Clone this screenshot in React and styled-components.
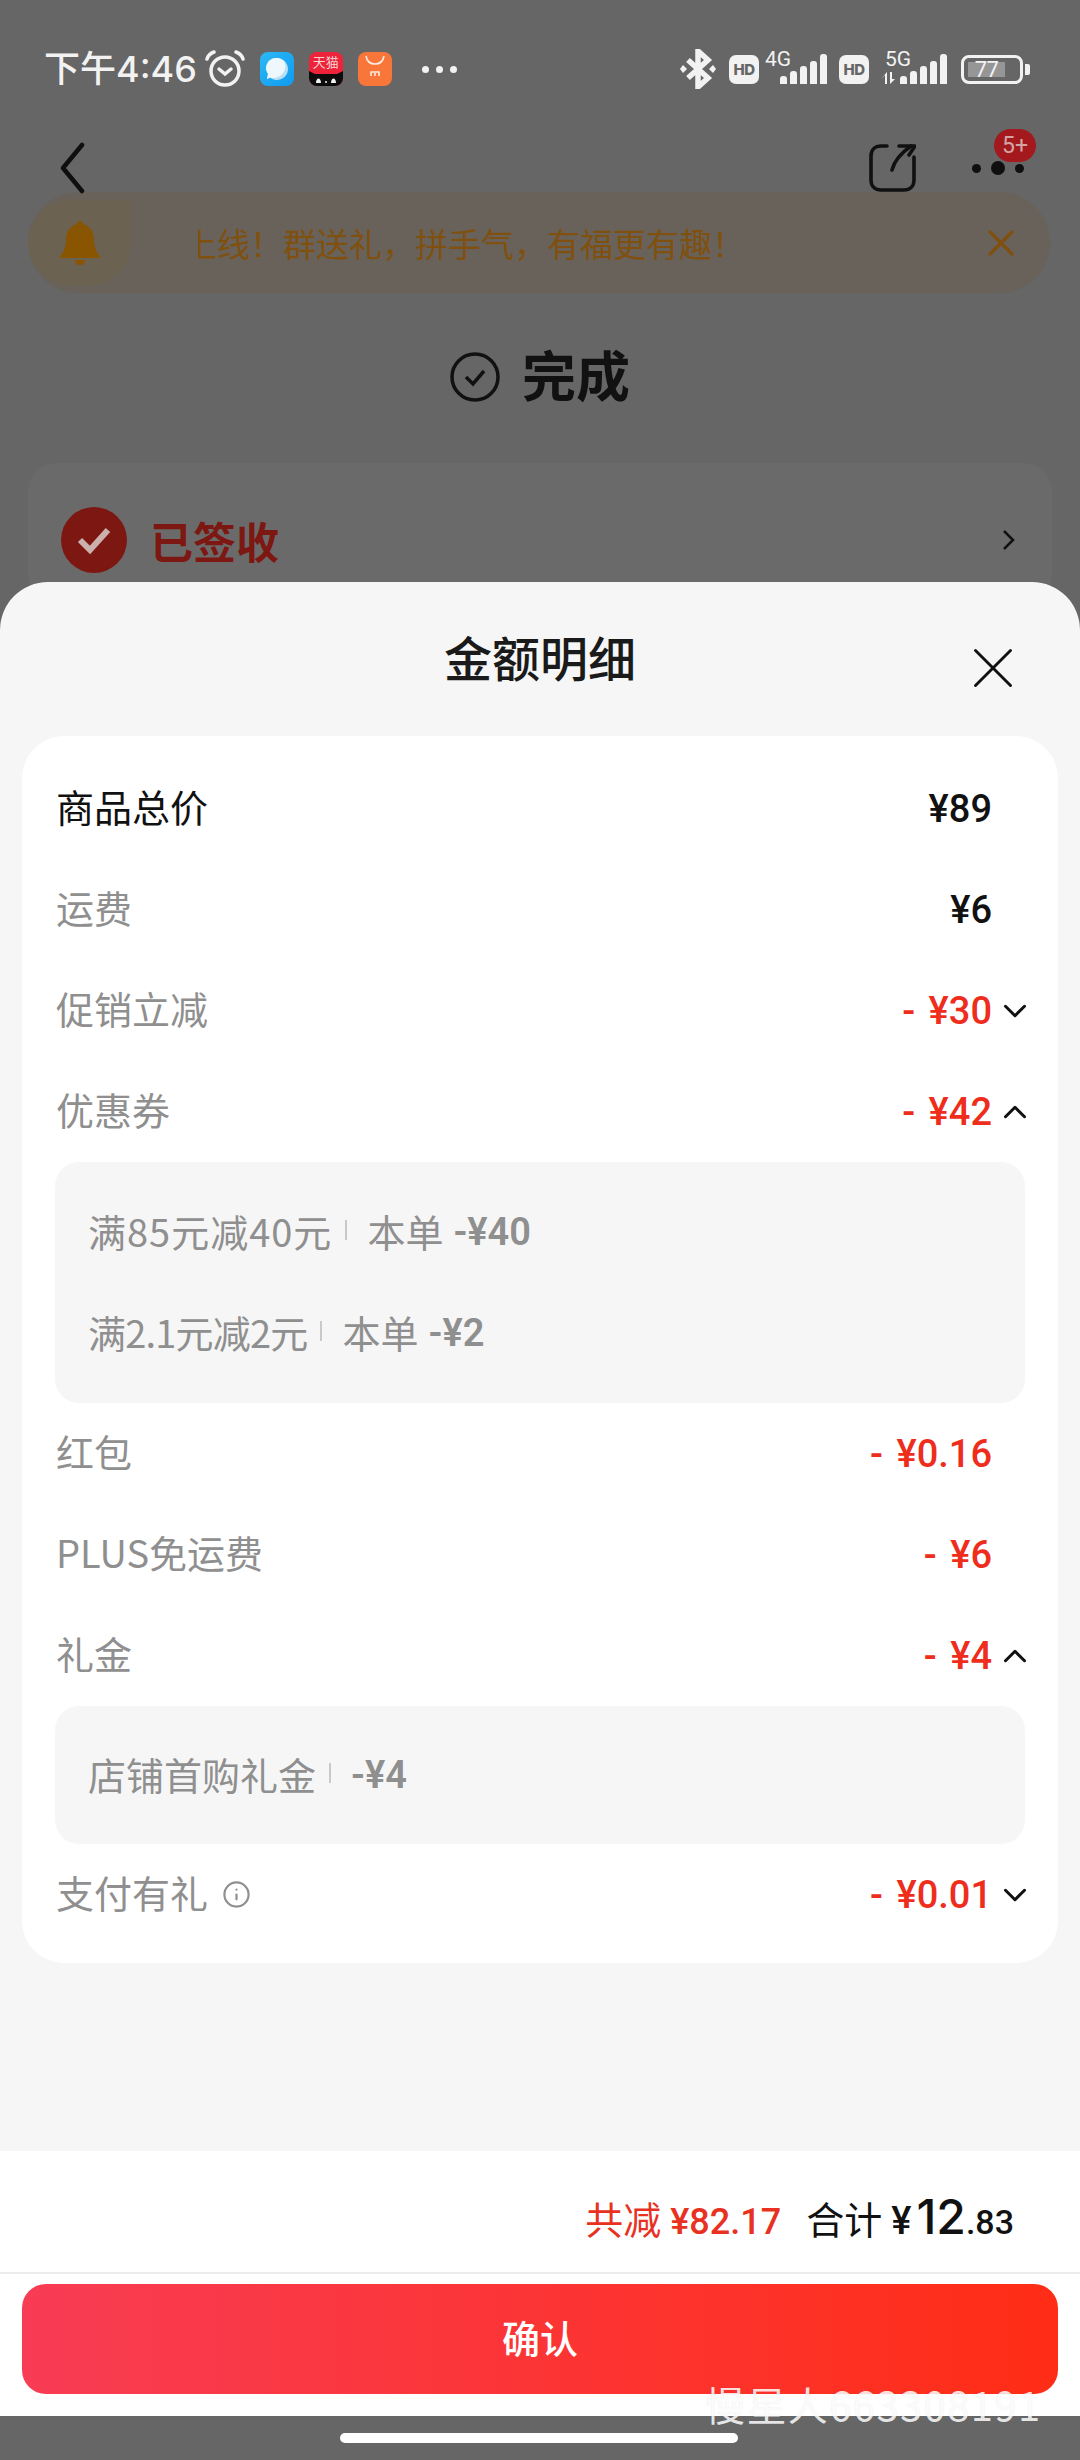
import styled, { createGlobalStyle } from "styled-components";
import { ChevronDown, ChevronUp, X, Info } from "lucide-react";

const FONT = `"Noto Sans CJK SC", "Noto Sans", sans-serif`;
const NUM = `"Roboto", "Noto Sans CJK SC", sans-serif`;

const Global = createGlobalStyle`
  html, body { margin: 0; padding: 0; background: #666; }
  * { box-sizing: border-box; }
`;

const Page = styled.div`
  position: relative;
  width: 1080px;
  height: 2460px;
  background: #666;
  overflow: hidden;
  font-family: ${FONT};
`;

const StatusBar = styled.div`
  height: 134px;
  padding: 46px 50px 0 44px;
  display: flex;
  align-items: flex-start;
  justify-content: space-between;
`;
const StatusSide = styled.div`
  height: 46px;
  display: flex;
  align-items: center;
`;
const Clock = styled.span`
  font-size: 36px;
  font-weight: 500;
  line-height: 46px;
  color: #f2f2f2;
  font-family: "Inter", "Noto Sans CJK SC", sans-serif;
  margin-right: 8px;
`;
const AppIcon = styled.div`
  width: 34px;
  height: 34px;
  border-radius: 8px;
  margin-left: 15px;
  background: ${(p) => p.$bg};
  position: relative;
  overflow: hidden;
  display: flex;
  align-items: center;
  justify-content: center;
`;
const TmallLabel = styled.span`
  position: absolute;
  top: 2px;
  left: 0;
  right: 0;
  text-align: center;
  color: #f6d5d5;
  font-size: 13px;
  line-height: 16px;
`;
const TmallCat = styled.svg`
  position: absolute;
  left: 0;
  bottom: 0;
`;
const MoreDots = styled.div`
  display: flex;
  gap: 7px;
  margin-left: 30px;
`;
const Dot = styled.i`
  width: 7px;
  height: 7px;
  border-radius: 50%;
  background: #f2f2f2;
`;
const Hd = styled.span`
  width: 30px;
  height: 29px;
  margin-left: ${(p) => p.$gap || 0}px;
  border-radius: 7px;
  background: #f2f2f2;
  color: #666;
  font: 800 15px/29px "Inter", sans-serif;
  text-align: center;
  letter-spacing: -0.5px;
`;
const NetLabel = styled.span`
  position: absolute;
  left: -15px;
  top: -6px;
  font: 400 21px/22px "Roboto", sans-serif;
  color: #f2f2f2;
`;
const NetArrows = styled.svg`
  position: absolute;
  left: -19px;
  bottom: 0;
`;
const Signal = styled.div`
  position: relative;
  height: 30px;
  margin: 0 ${(p) => p.$right}px 0 ${(p) => p.$left}px;
  display: flex;
  align-items: flex-end;
  gap: 3px;
`;
const Bar = styled.i`
  width: 7px;
  height: ${(p) => p.$h}px;
  background: #f2f2f2;
  border-radius: 3px 3px 0 0;
`;
const Battery = styled.div`
  width: 62px;
  height: 29px;
  border: 3px solid #f2f2f2;
  border-radius: 8px;
  padding: 4px 4px;
  display: flex;
`;
const BatteryFill = styled.div`
  width: 37px;
  background: #969696;
  display: flex;
  align-items: center;
  justify-content: center;
  color: #f2f2f2;
  font: 400 22px/17px "Roboto", sans-serif;
  letter-spacing: -0.5px;
`;
const BatteryTip = styled.i`
  width: 5px;
  height: 11px;
  margin-left: 2px;
  background: #f2f2f2;
  border-radius: 0 2px 2px 0;
`;

const NavBar = styled.div`
  height: 58px;
  padding: 8px 56px 0 60px;
  display: flex;
  align-items: flex-start;
  justify-content: space-between;
`;
const NavRight = styled.div`
  display: flex;
  align-items: center;
  gap: 56px;
  margin-top: 2px;
`;
const MoreWrap = styled.div`
  position: relative;
  display: flex;
  align-items: center;
  gap: 10px;
`;
const NavDot = styled.i`
  width: ${(p) => p.$s}px;
  height: ${(p) => p.$s}px;
  border-radius: 50%;
  background: #0f0f0f;
`;
const Badge = styled.span`
  position: absolute;
  top: -32px;
  right: -12px;
  width: 42px;
  height: 33px;
  border-radius: 17px;
  background: #a4191d;
  color: #d3a4a4;
  font: 400 23px/33px "Roboto", sans-serif;
  text-align: center;
`;

const Notice = styled.div`
  margin: 0 30px 0 28px;
  height: 101px;
  border-radius: 51px;
  background: #68625a;
  display: flex;
  align-items: center;
  color: #80500f;
  font-size: 33px;
`;
const BellWrap = styled.div`
  width: 103px;
  height: 86px;
  border-radius: 43px 0 43px 43px;
  background: #6c6252;
  display: flex;
  align-items: center;
  justify-content: center;
  flex-shrink: 0;
`;
const NoticeText = styled.div`
  margin-left: 67px;
  flex: 1;
  min-width: 0;
  overflow: hidden;
  white-space: nowrap;
`;
const NoticeScroll = styled.div`
  margin-left: -14px;
`;
const NoticeClose = styled.div`
  margin-right: 27px;
  display: flex;
`;

const OrderState = styled.div`
  margin-top: 54px;
  height: 60px;
  display: flex;
  align-items: center;
  justify-content: center;
  gap: 22px;
  color: #111;
`;
const OrderTitle = styled.span`
  font-size: 54px;
  line-height: 60px;
  font-weight: 700;
  margin-top: -6px;
`;
const SignCard = styled.div`
  margin: 56px 28px 0;
  height: 140px;
  padding: 44px 36px 0 33px;
  border-radius: 28px;
  background: #6a6a6a;
  display: flex;
  align-items: flex-start;
  justify-content: space-between;
`;
const SignLeft = styled.div`
  display: flex;
  align-items: center;
  gap: 23px;
  height: 66px;
  color: #7d1712;
  font-size: 43px;
  line-height: 60px;
  font-weight: 700;
`;
const SignMark = styled.div`
  width: 66px;
  height: 66px;
  border-radius: 50%;
  background: #7d1712;
  display: flex;
  align-items: center;
  justify-content: center;
`;
const CardArrow = styled.svg`
  margin-top: 22px;
`;

const Sheet = styled.div`
  position: absolute;
  left: 0;
  right: 0;
  top: 582px;
  height: 1834px;
  background: #f6f6f6;
  border-radius: 48px 48px 0 0;
  overflow: hidden;
  display: flex;
  flex-direction: column;
`;
const SheetHead = styled.div`
  position: relative;
  height: 154px;
  padding-top: 41px;
  text-align: center;
  font-size: 48px;
  line-height: 66px;
  font-weight: 500;
  color: #1a1a1a;
`;
const SheetClose = styled.div`
  position: absolute;
  top: 51px;
  right: 52px;
  display: flex;
`;
const Card = styled.div`
  margin: 0 22px;
  height: 1227px;
  padding-top: 22px;
  background: #fff;
  border-radius: 42px;
`;
const Row = styled.div`
  height: 101px;
  padding: 0 66px 0 34px;
  position: relative;
  display: flex;
  align-items: center;
  justify-content: space-between;
  font-size: 38px;
  color: ${(p) => (p.$strong ? "#111" : "#8f8f8f")};
`;
const Label = styled.div`
  display: flex;
  align-items: center;
  gap: 14px;
  padding-bottom: 6px;
`;
const InfoMark = styled.span`
  display: flex;
  margin-top: 6px;
`;
const Amount = styled.span`
  font-family: ${NUM};
  font-size: 38px;
  font-weight: 500;
  word-spacing: 4px;
  color: ${(p) => (p.$red ? "#ee2d1c" : "#111")};
`;
const Toggle = styled.div`
  position: absolute;
  right: 24px;
  top: 50%;
  margin-top: -19px;
  display: flex;
`;
const SubBox = styled.div`
  margin: 0 33px;
  padding: ${(p) => (p.$single ? "18px 33px 19px" : "19px 33px 20px")};
  background: #f6f6f6;
  border-radius: 24px;
`;
const SubRow = styled.div`
  height: 101px;
  padding-bottom: 3px;
  display: flex;
  align-items: center;
  font-size: 38px;
  color: #8f8f8f;
`;
const SubName = styled.span`
  letter-spacing: ${(p) => p.$track || 0}px;
`;
const Sep = styled.i`
  width: 2px;
  height: 20px;
  margin: 0 20px 0 13px;
  background: #c9c9c9;
`;
const SubAmount = styled.span`
  font-family: ${NUM};
  font-weight: 600;
  font-size: 38px;
  margin-top: 3px;
  margin-left: ${(p) => (p.$gap ? 10 : 0)}px;
`;
const Spacer = styled.div`
  flex: 1;
`;
const Summary = styled.div`
  height: 123px;
  padding: 36px 66px 0 0;
  background: #fff;
  display: flex;
  align-items: baseline;
  justify-content: flex-end;
  border-bottom: 2px solid #ececec;
  font-size: 38px;
  color: #111;
`;
const Saved = styled.span`
  color: #e8321f;
  margin-right: 25px;
`;
const SavedAmount = styled.span`
  font-family: ${NUM};
  font-size: 36px;
  font-weight: 500;
  margin-left: 9px;
`;
const TotalAmount = styled.span`
  font-family: ${NUM};
  font-weight: 500;
  margin-left: 9px;
`;
const TotalBig = styled.span`
  font-family: "Inter", sans-serif;
  font-weight: 500;
  font-size: 48px;
  margin-left: 5px;
`;
const TotalSmall = styled.span`
  font-size: 34px;
`;
const Footer = styled.div`
  height: 142px;
  padding: 10px 22px 0;
  background: #fff;
`;
const Confirm = styled.button`
  width: 100%;
  height: 110px;
  padding: 0 0 5px;
  border: none;
  border-radius: 24px;
  background: linear-gradient(90deg, #f83c54, #ff2d16);
  color: #fff;
  font-family: ${FONT};
  font-size: 38px;
  font-weight: 500;
`;
const HomeBar = styled.div`
  position: absolute;
  left: 340px;
  top: 2433px;
  width: 398px;
  height: 10px;
  border-radius: 5px;
  background: #fff;
`;
const Watermark = styled.div`
  position: absolute;
  left: 705px;
  top: 2380px;
  font-size: 40px;
  line-height: 48px;
  letter-spacing: 1.4px;
  color: rgba(255, 255, 255, 0.85);
  text-shadow: 0 0 1px rgba(0, 0, 0, 0.1);
  white-space: nowrap;
`;

const bars = [8, 13, 18, 23, 30];

const Bars = ({ label, left, right, arrows }) => (
  <Signal $left={left} $right={right}>
    <NetLabel>{label}</NetLabel>
    {arrows && (
      <NetArrows width="15" height="12" viewBox="0 0 15 12" fill="#f2f2f2">
        <path d="M0 7l4-4 0 9h2V0zM9 0v12l5-5-3 0V0z" />
      </NetArrows>
    )}
    {bars.map((h) => (
      <Bar key={h} $h={h} />
    ))}
  </Signal>
);

const Bluetooth = () => (
  <svg width="36" height="40" viewBox="0 0 36 40" fill="none">
    <path d="M8 11l20 18-10 9V2l10 9L8 29" stroke="#f2f2f2" strokeWidth="5.5" />
    <path d="M3 16l4 4-4 4-3-4zM33 16l3 4-3 4-4-4z" fill="#f2f2f2" />
  </svg>
);

const Alarm = () => (
  <svg width="40" height="38" viewBox="0 0 40 38" fill="none" stroke="#f2f2f2" strokeWidth="3.5" strokeLinecap="round">
    <circle cx="20" cy="21" r="14" />
    <path d="M14 19l6 5 6-5" />
    <path d="M2 9c1-3 4-6 7-7M38 9c-1-3-4-6-7-7" />
  </svg>
);

const Share = () => (
  <svg width="47" height="48" viewBox="0 0 47 48" fill="none" stroke="#111" strokeWidth="3.6" strokeLinecap="round" strokeLinejoin="round">
    <path d="M18 2h-6C6 2 2 6 2 12v24c0 6 4 10 10 10h23c6 0 10-4 10-10V13" />
    <path d="M23 26c2-8 9-17 19-24" />
    <path d="M30 2h16l-6 9" />
  </svg>
);

const Bell = () => (
  <svg width="40" height="46" viewBox="0 0 40 46" fill="#8a5500">
    <path d="M20 1c2 0 3 1 3 3 7 2 11 8 11 15 0 8 2 13 6 17v2H0v-2c4-4 6-9 6-17 0-7 4-13 11-15 0-2 1-3 3-3z" />
    <path d="M15 40h10c0 3-2 5-5 5s-5-2-5-5z" />
  </svg>
);

const StateMark = () => (
  <svg width="50" height="50" viewBox="0 0 50 50" fill="none" stroke="#111" strokeWidth="3.5">
    <circle cx="25" cy="25" r="23" />
    <path d="M16 25l7 7 11-13" />
  </svg>
);

export default function App() {
  return (
    <Page>
      <Global />
      <StatusBar>
        <StatusSide>
          <Clock>下午4:46</Clock>
          <Alarm />
          <AppIcon $bg="linear-gradient(135deg,#2cb8f5,#0f9bf0)">
            <svg width="26" height="26" viewBox="0 0 26 26">
              <path d="M13 2a11 11 0 1 1-7 19.500L3 23l1-5A11 11 0 0 1 13 2z" fill="#b9dff5" />
              <path d="M12 2a10 10 0 0 0-8 16l-1 5 3-1.500A12 12 0 0 0 21 7a10 10 0 0 0-9-5z" fill="#eef7fc" />
            </svg>
          </AppIcon>
          <AppIcon $bg="#ee2238">
            <TmallLabel>天猫</TmallLabel>
            <TmallCat width="34" height="15" viewBox="0 0 34 15">
              <path d="M0 0l6 3h22l6-3v15H0z" fill="#0c0c0c" />
              <path d="M7 12c0-6 5-6 5 0zM22 12c0-6 5-6 5 0z" fill="#f2f2f2" />
              <circle cx="17" cy="11" r="1" fill="#f2f2f2" />
            </TmallCat>
          </AppIcon>
          <AppIcon $bg="#f9763a">
            <svg width="24" height="28" viewBox="0 0 24 28" fill="none" stroke="#fdeadf" strokeWidth="1.6">
              <path d="M3 1c1 6 4 8 9 8s8-2 9-8" />
              <path d="M8 21v-4h8v4M12 18v3" />
            </svg>
          </AppIcon>
          <MoreDots>
            <Dot />
            <Dot />
            <Dot />
          </MoreDots>
        </StatusSide>
        <StatusSide>
          <Bluetooth />
          <Hd $gap={13}>HD</Hd>
          <Bars label="4G" left={21} right={12} />
          <Hd>HD</Hd>
          <Bars label="5G" left={31} right={14} arrows />
          <Battery>
            <BatteryFill>77</BatteryFill>
          </Battery>
          <BatteryTip />
        </StatusSide>
      </StatusBar>
      <NavBar>
        <svg width="26" height="52" viewBox="0 0 26 52" fill="none" stroke="#0f0f0f" strokeWidth="4.500" strokeLinecap="round" strokeLinejoin="round">
          <path d="M22 3L3 26l19 23" />
        </svg>
        <NavRight>
          <Share />
          <MoreWrap>
            <NavDot $s={9} />
            <NavDot $s={14} />
            <NavDot $s={9} />
            <Badge>5+</Badge>
          </MoreWrap>
        </NavRight>
      </NavBar>
      <Notice>
        <BellWrap>
          <Bell />
        </BellWrap>
        <NoticeText>
          <NoticeScroll>上线！群送礼，拼手气，有福更有趣！</NoticeScroll>
        </NoticeText>
        <NoticeClose>
          <X size={44} color="#80500f" strokeWidth={1.8} />
        </NoticeClose>
      </Notice>
      <OrderState>
        <StateMark />
        <OrderTitle>完成</OrderTitle>
      </OrderState>
      <SignCard>
        <SignLeft>
          <SignMark>
            <svg width="48" height="48" viewBox="0 0 24 24" fill="none" stroke="#ccb0ae" strokeWidth="3">
              <path d="M5 12l5 5 9-10" />
            </svg>
          </SignMark>
          已签收
        </SignLeft>
        <CardArrow width="14" height="22" viewBox="0 0 14 22" fill="none" stroke="#111" strokeWidth="2.500">
          <path d="M2 2l9 9-9 9" />
        </CardArrow>
      </SignCard>

      <Sheet>
        <SheetHead>
          金额明细
          <SheetClose>
            <X size={70} color="#111" strokeWidth={1} />
          </SheetClose>
        </SheetHead>
        <Card>
          <Row $strong>
            <Label>商品总价</Label>
            <Amount>¥89</Amount>
          </Row>
          <Row>
            <Label>运费</Label>
            <Amount>¥6</Amount>
          </Row>
          <Row>
            <Label>促销立减</Label>
            <Amount $red>- ¥30</Amount>
            <Toggle>
              <ChevronDown size={38} color="#111" strokeWidth={1.9} />
            </Toggle>
          </Row>
          <Row>
            <Label>优惠券</Label>
            <Amount $red>- ¥42</Amount>
            <Toggle>
              <ChevronUp size={38} color="#111" strokeWidth={1.9} />
            </Toggle>
          </Row>
          <SubBox>
            <SubRow>
              <SubName $track={1}>满85元减40元</SubName>
              <Sep />
              本单<SubAmount $gap>-¥40</SubAmount>
            </SubRow>
            <SubRow>
              <SubName $track={-0.8}>满2.1元减2元</SubName>
              <Sep />
              本单<SubAmount $gap>-¥2</SubAmount>
            </SubRow>
          </SubBox>
          <Row>
            <Label>红包</Label>
            <Amount $red>- ¥0.16</Amount>
          </Row>
          <Row>
            <Label>PLUS免运费</Label>
            <Amount $red>- ¥6</Amount>
          </Row>
          <Row>
            <Label>礼金</Label>
            <Amount $red>- ¥4</Amount>
            <Toggle>
              <ChevronUp size={38} color="#111" strokeWidth={1.9} />
            </Toggle>
          </Row>
          <SubBox $single>
            <SubRow>
              店铺首购礼金
              <Sep />
              <SubAmount>-¥4</SubAmount>
            </SubRow>
          </SubBox>
          <Row>
            <Label>
              支付有礼
              <InfoMark>
                <Info size={29} color="#8f8f8f" strokeWidth={1.8} />
              </InfoMark>
            </Label>
            <Amount $red>- ¥0.01</Amount>
            <Toggle>
              <ChevronDown size={38} color="#111" strokeWidth={1.9} />
            </Toggle>
          </Row>
        </Card>
        <Spacer />
        <Summary>
          <Saved>
            共减<SavedAmount>¥82.17</SavedAmount>
          </Saved>
          合计
          <TotalAmount>
            ¥<TotalBig>12</TotalBig>
            <TotalSmall>.83</TotalSmall>
          </TotalAmount>
        </Summary>
        <Footer>
          <Confirm>确认</Confirm>
        </Footer>
      </Sheet>
      <HomeBar />
      <Watermark>慢星人663308191</Watermark>
    </Page>
  );
}
